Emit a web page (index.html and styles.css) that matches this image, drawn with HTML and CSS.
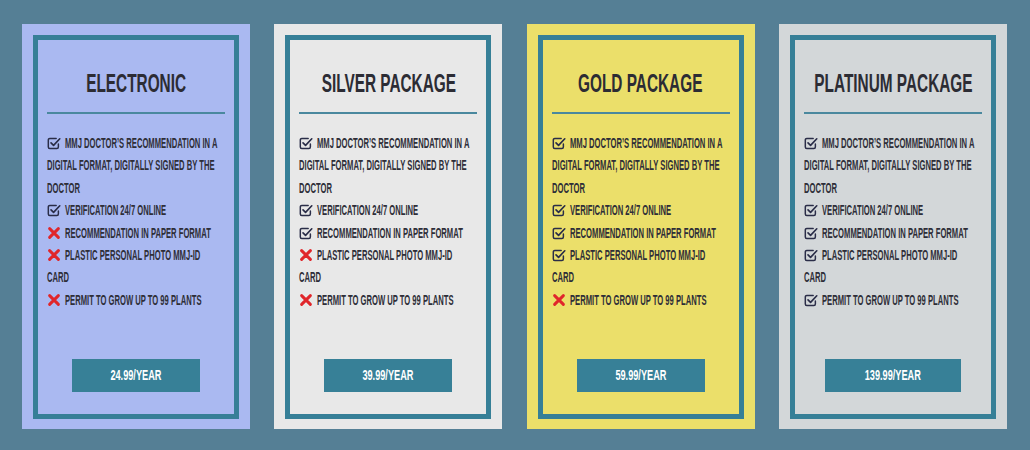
FILE: index.html
```html
<!DOCTYPE html>
<html lang="en">
<head>
<meta charset="utf-8">
<title>Packages</title>
<link rel="stylesheet" href="styles.css">
</head>
<body>
<svg width="0" height="0" class="defs">
  <defs>
    <symbol id="chk" viewBox="0 0 16 16">
      <path d="M10.5 2.8H3.2A1.7 1.7 0 0 0 1.5 4.5V12.6A1.7 1.7 0 0 0 3.2 14.3H11.3A1.7 1.7 0 0 0 13 12.6V9" fill="none" stroke="#2a2d48" stroke-width="1.7" stroke-linecap="round"/>
      <path d="M4.6 7.8L7.5 10.7L14.6 3.2" fill="none" stroke="#2a2d48" stroke-width="1.9" stroke-linecap="round" stroke-linejoin="round"/>
    </symbol>
    <symbol id="crs" viewBox="0 0 16 16">
      <path d="M3 3L13 13M13 3L3 13" fill="none" stroke="#e0262b" stroke-width="3.4" stroke-linecap="round"/>
    </symbol>
  </defs>
</svg>
<main class="plans">
  <section class="card card-electronic">
    <div class="frame">
      <div class="head"><h2 class="title">Electronic</h2></div>
      <hr class="rule">
      <ul class="features">
        <li><svg class="ico" viewBox="0 0 16 16" preserveAspectRatio="none"><use href="#chk"/></svg>MMJ Doctor’s recommendation in a digital format, digitally signed by the doctor</li>
        <li><svg class="ico" viewBox="0 0 16 16" preserveAspectRatio="none"><use href="#chk"/></svg>Verification 24/7 online</li>
        <li><svg class="ico" viewBox="0 0 16 16" preserveAspectRatio="none"><use href="#crs"/></svg>Recommendation in paper format</li>
        <li><svg class="ico" viewBox="0 0 16 16" preserveAspectRatio="none"><use href="#crs"/></svg>Plastic personal photo MMJ-ID card</li>
        <li><svg class="ico" viewBox="0 0 16 16" preserveAspectRatio="none"><use href="#crs"/></svg>Permit to grow up to 99 plants</li>
      </ul>
      <div class="cta"><a class="btn" href="#"><span>24.99/year</span></a></div>
    </div>
  </section>
  <section class="card card-silver">
    <div class="frame">
      <div class="head"><h2 class="title">Silver Package</h2></div>
      <hr class="rule">
      <ul class="features">
        <li><svg class="ico" viewBox="0 0 16 16" preserveAspectRatio="none"><use href="#chk"/></svg>MMJ Doctor’s recommendation in a digital format, digitally signed by the doctor</li>
        <li><svg class="ico" viewBox="0 0 16 16" preserveAspectRatio="none"><use href="#chk"/></svg>Verification 24/7 online</li>
        <li><svg class="ico" viewBox="0 0 16 16" preserveAspectRatio="none"><use href="#chk"/></svg>Recommendation in paper format</li>
        <li><svg class="ico" viewBox="0 0 16 16" preserveAspectRatio="none"><use href="#crs"/></svg>Plastic personal photo MMJ-ID card</li>
        <li><svg class="ico" viewBox="0 0 16 16" preserveAspectRatio="none"><use href="#crs"/></svg>Permit to grow up to 99 plants</li>
      </ul>
      <div class="cta"><a class="btn" href="#"><span>39.99/year</span></a></div>
    </div>
  </section>
  <section class="card card-gold">
    <div class="frame">
      <div class="head"><h2 class="title">Gold Package</h2></div>
      <hr class="rule">
      <ul class="features">
        <li><svg class="ico" viewBox="0 0 16 16" preserveAspectRatio="none"><use href="#chk"/></svg>MMJ Doctor’s recommendation in a digital format, digitally signed by the doctor</li>
        <li><svg class="ico" viewBox="0 0 16 16" preserveAspectRatio="none"><use href="#chk"/></svg>Verification 24/7 online</li>
        <li><svg class="ico" viewBox="0 0 16 16" preserveAspectRatio="none"><use href="#chk"/></svg>Recommendation in paper format</li>
        <li><svg class="ico" viewBox="0 0 16 16" preserveAspectRatio="none"><use href="#chk"/></svg>Plastic personal photo MMJ-ID card</li>
        <li><svg class="ico" viewBox="0 0 16 16" preserveAspectRatio="none"><use href="#crs"/></svg>Permit to grow up to 99 plants</li>
      </ul>
      <div class="cta"><a class="btn" href="#"><span>59.99/year</span></a></div>
    </div>
  </section>
  <section class="card card-platinum">
    <div class="frame">
      <div class="head"><h2 class="title">Platinum Package</h2></div>
      <hr class="rule">
      <ul class="features">
        <li><svg class="ico" viewBox="0 0 16 16" preserveAspectRatio="none"><use href="#chk"/></svg>MMJ Doctor’s recommendation in a digital format, digitally signed by the doctor</li>
        <li><svg class="ico" viewBox="0 0 16 16" preserveAspectRatio="none"><use href="#chk"/></svg>Verification 24/7 online</li>
        <li><svg class="ico" viewBox="0 0 16 16" preserveAspectRatio="none"><use href="#chk"/></svg>Recommendation in paper format</li>
        <li><svg class="ico" viewBox="0 0 16 16" preserveAspectRatio="none"><use href="#chk"/></svg>Plastic personal photo MMJ-ID card</li>
        <li><svg class="ico" viewBox="0 0 16 16" preserveAspectRatio="none"><use href="#chk"/></svg>Permit to grow up to 99 plants</li>
      </ul>
      <div class="cta"><a class="btn" href="#"><span>139.99/year</span></a></div>
    </div>
  </section>
</main>
</body>
</html>
```

FILE: styles.css
```css
html, body {
  margin: 0;
  padding: 0;
}
body {
  background: #557f95;
  width: 1030px;
  height: 450px;
  overflow: hidden;
  font-family: "Liberation Sans", Arial, sans-serif;
  color: #2c2c36;
  --sx: 0.545;
}
.defs {
  position: absolute;
  width: 0;
  height: 0;
}
.plans {
  display: flex;
  gap: 24.33px;
  padding: 24px 0 0 22px;
}
.card {
  width: 228px;
  height: 405px;
  box-sizing: border-box;
  padding: 11px 11px 10px 11px;
  flex: none;
}
.card-electronic { background: #aab9f1; }
.card-silver { background: #e8e8e8; }
.card-gold { background: #ebdf6a; }
.card-platinum { background: #d3d7d9; }

.frame {
  height: 100%;
  box-sizing: border-box;
  border: 5px solid #367f97;
  padding: 0 9px 22px 9px;
  display: flex;
  flex-direction: column;
  overflow: hidden;
}
.head {
  display: flex;
  justify-content: center;
  margin-top: 27px;
}
.title {
  margin: 0;
  flex: none;
  font-size: 26.5px;
  line-height: 32px;
  font-weight: bold;
  text-transform: uppercase;
  white-space: nowrap;
  transform: scaleX(0.58);
  transform-origin: 50% 50%;
  color: #2c2c34;
}
.rule {
  margin: 13px 0 0 0;
  border: 0;
  height: 2px;
  background: #4a889e;
}
.features {
  list-style: none;
  margin: 18px 0 0 0;
  padding: 0;
  width: calc((100% - 2px) / var(--sx));
  transform: scaleX(var(--sx));
  transform-origin: 0 0;
  font-size: 14px;
  font-weight: bold;
  line-height: 22.4px;
  text-transform: uppercase;
  color: #2e2e38;
}
.features li {
  margin: 0;
}
.ico {
  width: 25.7px;
  height: 14px;
  vertical-align: -2px;
  margin-right: 7.3px;
}
.cta {
  margin-top: auto;
  display: flex;
  justify-content: center;
}
.btn {
  display: block;
  height: 33px;
  line-height: 33px;
  padding: 0 25px;
  background: #378097;
  color: #ffffff;
  text-decoration: none;
  text-transform: uppercase;
  font-size: 14px;
  font-weight: bold;
  text-align: center;
}
.btn span {
  display: inline-block;
  transform: scaleX(0.656);
}
```
